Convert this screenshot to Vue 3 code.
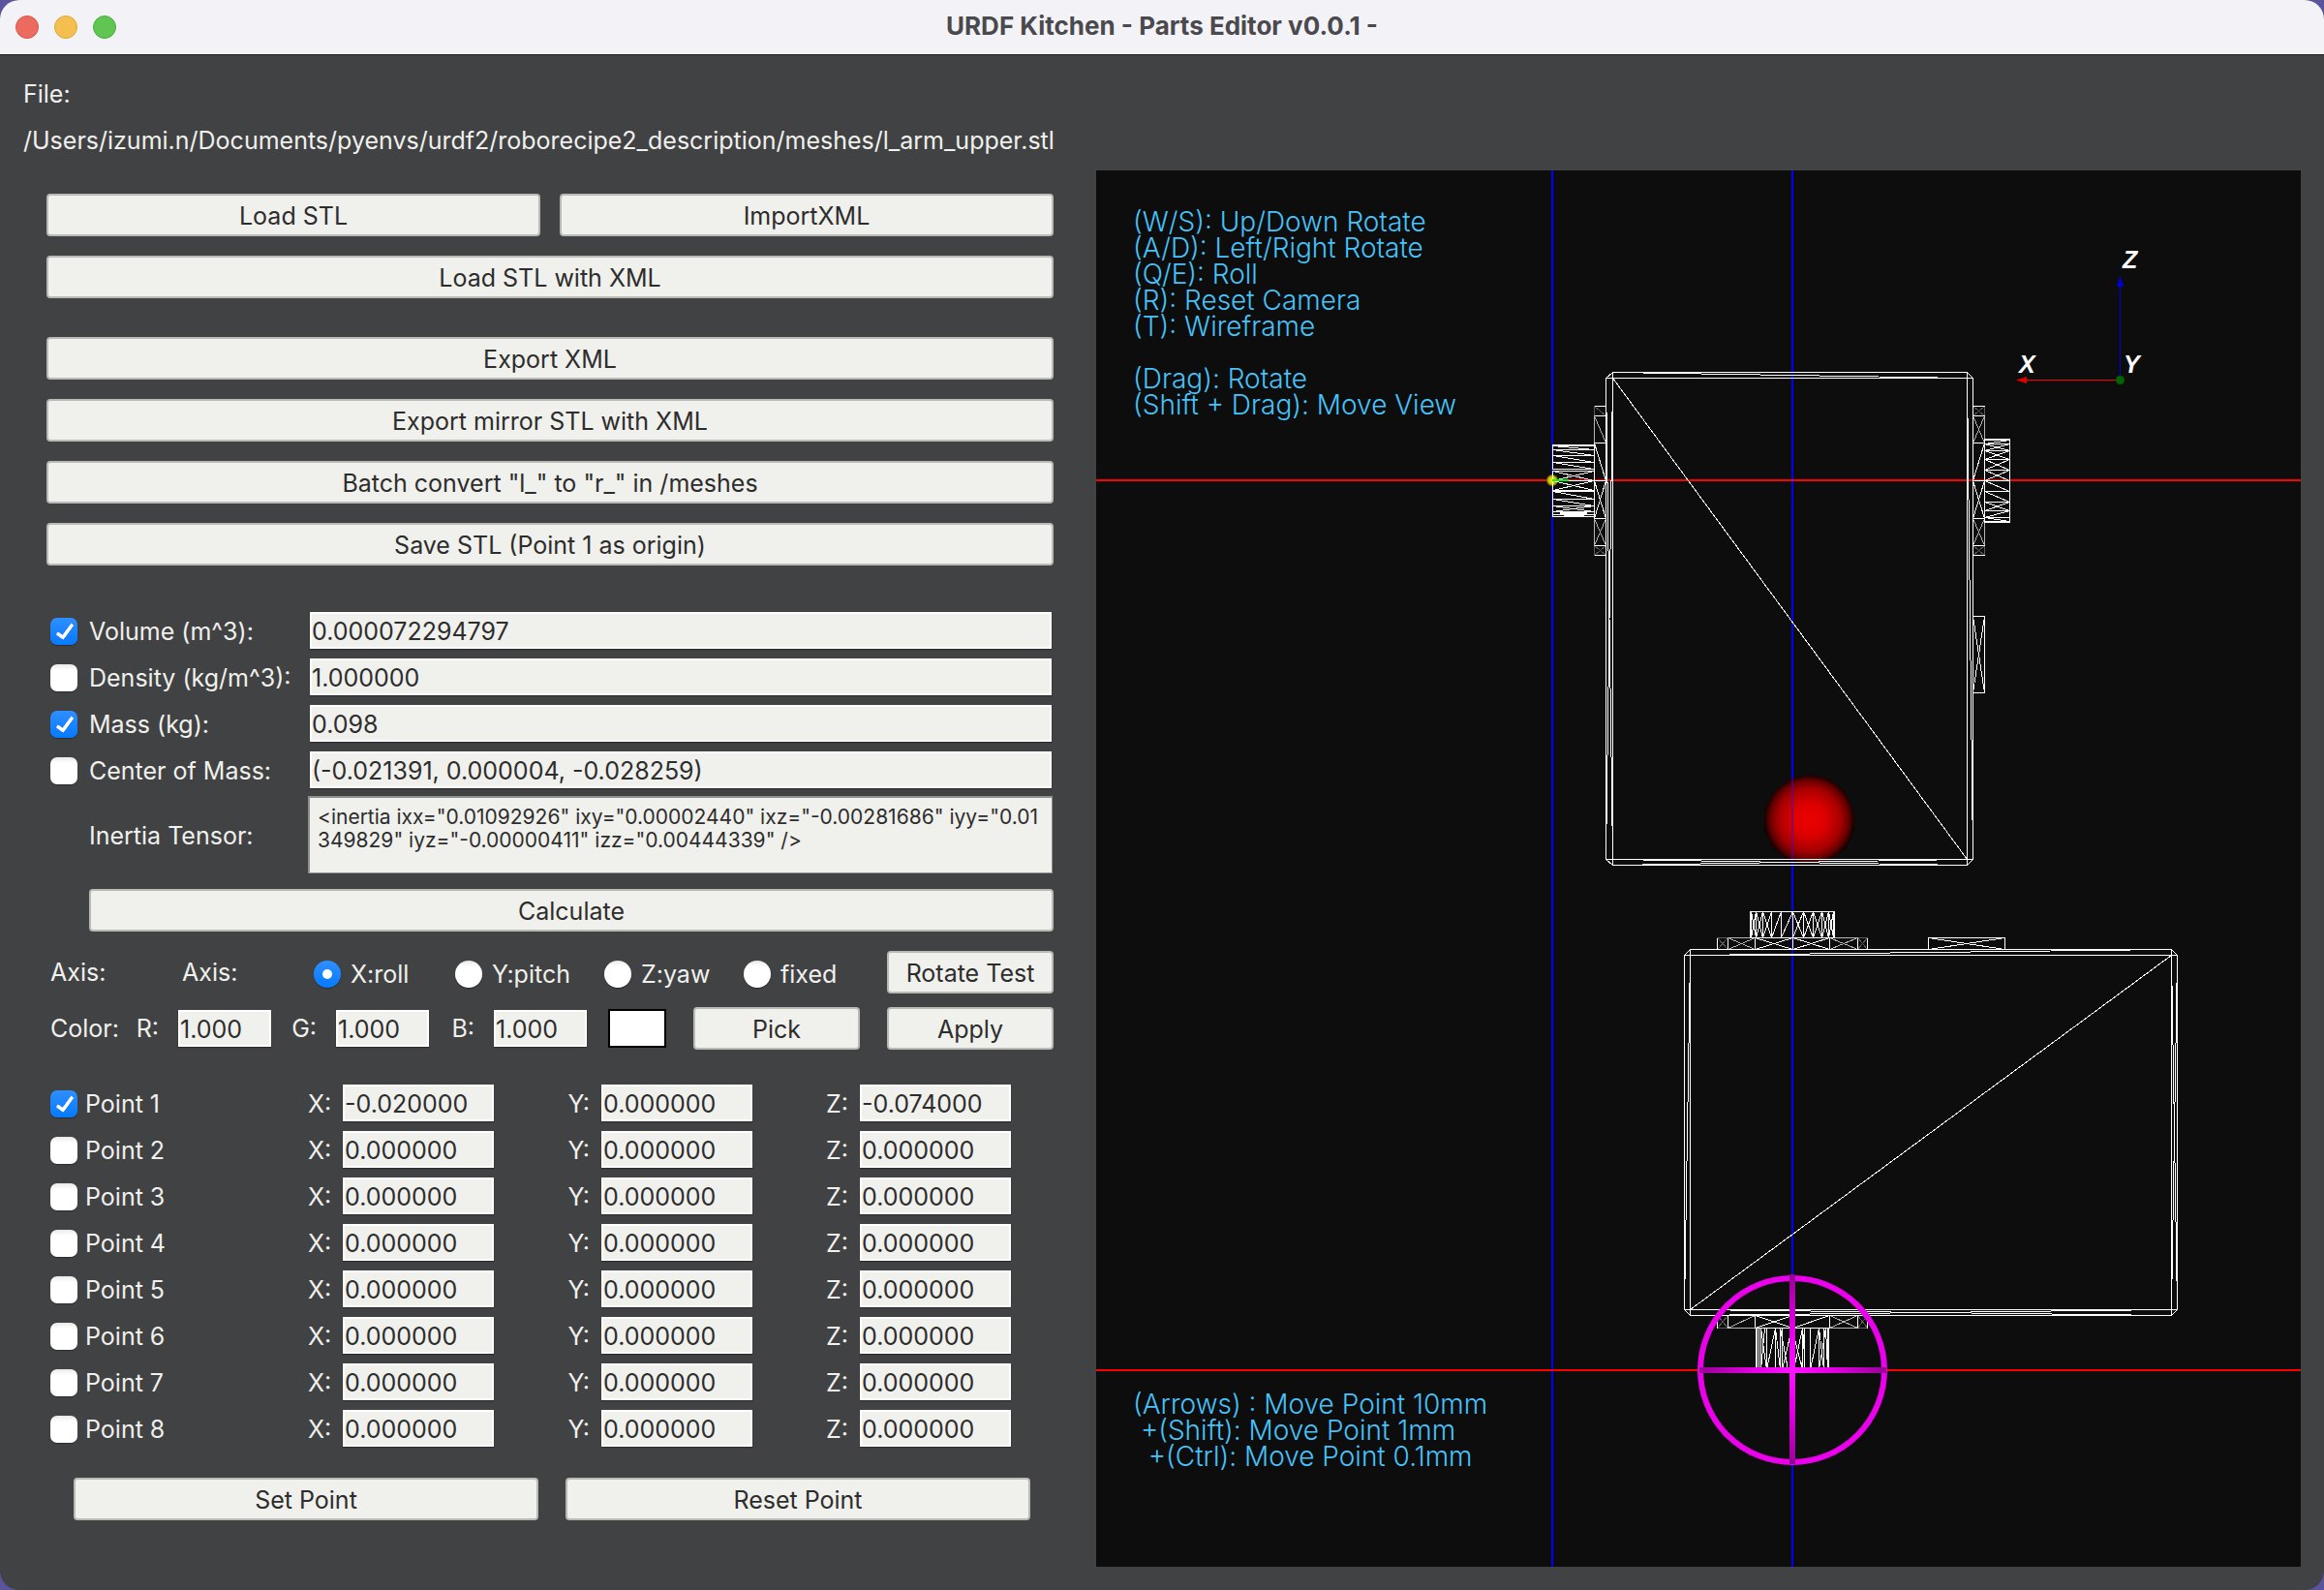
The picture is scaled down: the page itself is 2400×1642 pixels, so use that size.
<script setup>
import { ref, reactive } from 'vue'

const filePath = ref('/Users/izumi.n/Documents/pyenvs/urdf2/roborecipe2_description/meshes/l_arm_upper.stl')

const exportActions = [
  'Export XML',
  'Export mirror STL with XML',
  'Batch convert "l_" to "r_" in /meshes',
  'Save STL (Point 1 as origin)',
]

const properties = reactive([
  { id: 'volume', label: 'Volume (m^3):', value: '0.000072294797', on: true },
  { id: 'density', label: 'Density (kg/m^3):', value: '1.000000', on: false },
  { id: 'mass', label: 'Mass (kg):', value: '0.098', on: true },
  { id: 'com', label: 'Center of Mass:', value: '(-0.021391, 0.000004, -0.028259)', on: false },
])

const inertia = ref(
  '<inertia ixx="0.01092926" ixy="0.00002440" ixz="-0.00281686" iyy="0.01349829" iyz="-0.00000411" izz="0.00444339" />'
)

const axis = ref('X:roll')
const axes = ['X:roll', 'Y:pitch', 'Z:yaw', 'fixed']

const color = reactive({ R: '1.000', G: '1.000', B: '1.000' })

const points = reactive(
  Array.from({ length: 8 }, (_, i) => ({
    name: `Point ${i + 1}`,
    on: i === 0,
    coords: i === 0
      ? { X: '-0.020000', Y: '0.000000', Z: '-0.074000' }
      : { X: '0.000000', Y: '0.000000', Z: '0.000000' },
  }))
)

const cameraHints = `(W/S): Up/Down Rotate
(A/D): Left/Right Rotate
(Q/E): Roll
(R): Reset Camera
(T): Wireframe

(Drag): Rotate
(Shift + Drag): Move View`

const moveHints = `(Arrows) : Move Point 10mm
 +(Shift): Move Point 1mm
  +(Ctrl): Move Point 0.1mm`

// Wireframe helpers: a cell is a box with optional falling and rising diagonals.
function cell(x1, y1, x2, y2, diagonals = 'x') {
  let d = `M${x1} ${y1}H${x2}V${y2}H${x1}Z`
  if (diagonals !== '/') d += `M${x1} ${y1}L${x2} ${y2}`
  if (diagonals !== '\\') d += `M${x1} ${y2}L${x2} ${y1}`
  return d
}
const stackY = (x1, x2, ys, kinds) =>
  kinds.map((k, i) => cell(x1, ys[i], x2, ys[i + 1], k)).join('')
const stackX = (y1, y2, xs, kinds) =>
  kinds.map((k, i) => cell(xs[i], y1, xs[i + 1], y2, k)).join('')

const X = 'x'
const F = '\\'
const R = '/'

const bodyWires = [
  // front view shell
  'M1665 384H2031L2037 390V887L2031 893H1665L1658 887V390Z',
  'M1658 390H2037M1658 887H2037M1665 384V893M2031 384V893',
  'M1665 384L2031 390M1665 390L1658 887M1658 390L1665 887M2031 390L2037 887',
  'M1665 887L2031 893M1665 893L2031 887M1665 390L2031 887',
  // top view shell
  'M1745 980H2242L2248 986V1352L2242 1358H1745L1739 1352V986Z',
  'M1739 986H2248M1739 1352H2248M1745 980V1358M2242 980V1358',
  'M1745 986L2242 980M1745 986L1739 1352M2242 986L2248 1352M2248 986L2242 1352',
  'M1745 1352L2242 1358M1745 1358L2242 1352M1745 1352L2242 986',
  // left horn
  stackY(1646, 1658, [457, 496, 535], [F, X]),
  stackY(1603, 1646, [459, 460, 464, 470, 477, 484], [F, F, F, F, F]),
  stackY(1603, 1646, [486, 496, 506], [X, X]),
  stackY(1603, 1646, [507, 515, 522, 528, 531, 533], [F, F, X, X, F]),
  // right horn
  stackY(2037, 2049, [457, 496, 535], [R, X]),
  stackY(2049, 2075, [453, 454, 458, 465, 474, 485, 496, 507, 518, 527, 534, 538, 539], [F, R, X, X, X, X, F, F, X, R, F, F]),
  cell(2037, 636, 2049, 715),
  // upper horn of the top view
  stackX(968, 980, [1812, 1851, 1889], [X, X]),
  stackX(941, 968, [1807, 1808, 1813, 1820, 1829, 1839, 1851, 1862, 1872, 1881, 1888, 1893, 1894], [F, X, X, X, R, R, X, X, X, X, X, R]),
  cell(1991, 968, 2070, 980),
  // lower horn of the top view
  stackX(1358, 1371, [1812, 1851, 1889], [X, R]),
  'M1813 1371V1414M1814 1371V1414M1816 1371V1414M1818 1371V1414M1824 1371V1414M1833 1371V1414M1838 1371V1414M1840 1371V1414M1861 1371V1414M1863 1371V1414M1869 1371V1414M1878 1371V1414M1883 1371V1414M1887 1371V1414M1888 1371V1414',
  'M1818 1371L1824 1414M1824 1414L1833 1371L1838 1414M1838 1371L1846 1414M1840 1414L1850 1371M1850 1371L1861 1414M1852 1414L1861 1371M1863 1371L1860 1414M1869 1414L1878 1371L1883 1414M1878 1414L1885 1371L1887 1414M1818 1414L1822 1371',
].join('')

const midWires = [
  stackY(1646, 1658, [429, 457], [F]),
  stackY(1646, 1658, [535, 563], [X]),
  stackY(2037, 2049, [429, 457], [X]),
  stackY(2037, 2049, [535, 563], [X]),
  stackX(968, 980, [1784, 1812], [X]),
  stackX(968, 980, [1889, 1918], [X]),
  stackX(1358, 1371, [1784, 1812], [R]),
  stackX(1358, 1371, [1889, 1918], [X]),
].join('')

const dimWires = [
  stackY(1646, 1658, [419, 429], [F]),
  stackY(1646, 1658, [563, 573], [X]),
  stackY(2037, 2049, [419, 429], [X]),
  stackY(2037, 2049, [563, 573], [X]),
  stackX(968, 980, [1773, 1784], [X]),
  stackX(968, 980, [1918, 1928], [X]),
  stackX(1358, 1371, [1773, 1784], [X]),
  stackX(1358, 1371, [1918, 1928], [X]),
].join('')

const edgeWires =
  'M1646 419H1658M1646 429H1658M1646 457H1658M1646 535H1658M1646 563H1658M1646 573H1658' +
  'M2037 419H2049M2037 429H2049M2037 457H2049M2037 535H2049M2037 563H2049M2037 573H2049' +
  'M1773 968V980M1784 968V980M1918 968V980M1928 968V980' +
  'M1773 1358V1371M1784 1358V1371M1918 1358V1371M1928 1358V1371'
</script>

<template>
  <div class="window">
    <header class="titlebar">
      <div class="lights">
        <button class="light close" aria-label="Close"></button>
        <button class="light minimize" aria-label="Minimize"></button>
        <button class="light maximize" aria-label="Zoom"></button>
      </div>
      <h1>URDF Kitchen - Parts Editor v0.0.1 -</h1>
    </header>

    <main>
      <div class="file">
        <span>File:</span>
        <span>{{ filePath }}</span>
      </div>

      <div class="columns">
        <form class="panel" @submit.prevent>
          <div class="actions">
            <button type="button">Load STL</button>
            <button type="button">ImportXML</button>
            <button type="button" class="wide">Load STL with XML</button>
          </div>
          <div class="actions exports">
            <button v-for="a in exportActions" :key="a" type="button" class="wide">{{ a }}</button>
          </div>

          <div class="properties">
            <div v-for="p in properties" :key="p.id" class="property">
              <label class="check">
                <input v-model="p.on" type="checkbox" />
                <span>{{ p.label }}</span>
              </label>
              <input v-model="p.value" type="text" class="field" :aria-label="p.label" />
            </div>
          </div>
          <div class="inertia">
            <label for="inertia">Inertia Tensor:</label>
            <textarea id="inertia" v-model="inertia" spellcheck="false"></textarea>
          </div>
          <div class="calculate">
            <button type="button">Calculate</button>
          </div>

          <div class="axis">
            <span class="caption">Axis:</span>
            <span class="caption">Axis:</span>
            <div class="choices">
              <label v-for="a in axes" :key="a" class="radio">
                <input v-model="axis" type="radio" name="axis" :value="a" />
                <span>{{ a }}</span>
              </label>
            </div>
            <button type="button" class="small">Rotate Test</button>
          </div>

          <div class="color">
            <span class="caption">Color:</span>
            <label v-for="(v, k) in color" :key="k" class="channel">
              <span>{{ k }}:</span>
              <input v-model="color[k]" type="text" class="field" />
            </label>
            <span class="swatch"></span>
            <button type="button" class="small">Pick</button>
            <button type="button" class="small">Apply</button>
          </div>

          <div class="points">
            <div v-for="p in points" :key="p.name" class="point">
              <label class="check">
                <input v-model="p.on" type="checkbox" />
                <span>{{ p.name }}</span>
              </label>
              <label v-for="(v, k) in p.coords" :key="k" class="coord">
                <span>{{ k }}:</span>
                <input v-model="p.coords[k]" type="text" class="field" />
              </label>
            </div>
          </div>

          <div class="footer">
            <button type="button">Set Point</button>
            <button type="button">Reset Point</button>
          </div>
        </form>

        <section class="viewer">
          <svg viewBox="1132 176 1244 1442" role="img" aria-label="Wireframe view">
            <defs>
              <radialGradient id="ball" cx="0.5" cy="0.5" r="0.5">
                <stop offset="0" stop-color="#ec0000" />
                <stop offset="0.35" stop-color="#de0000" />
                <stop offset="0.7" stop-color="#a60000" />
                <stop offset="0.88" stop-color="#640000" />
                <stop offset="1" stop-color="#120202" />
              </radialGradient>
              <radialGradient id="origin" cx="0.5" cy="0.5" r="0.5">
                <stop offset="0" stop-color="#fff200" />
                <stop offset="0.6" stop-color="#d2c800" />
                <stop offset="1" stop-color="#5a5600" />
              </radialGradient>
              <linearGradient id="spokeV" x1="0" y1="0" x2="0" y2="1">
                <stop offset="0" stop-color="#960096" />
                <stop offset="0.3" stop-color="#e600e6" />
                <stop offset="0.5" stop-color="#ff14ff" />
                <stop offset="0.7" stop-color="#e600e6" />
                <stop offset="1" stop-color="#960096" />
              </linearGradient>
              <linearGradient id="spokeH">
                <stop offset="0" stop-color="#960096" />
                <stop offset="0.3" stop-color="#e600e6" />
                <stop offset="0.5" stop-color="#ff14ff" />
                <stop offset="0.7" stop-color="#e600e6" />
                <stop offset="1" stop-color="#960096" />
              </linearGradient>
            </defs>

            <g fill="none" stroke-width="2">
              <path stroke="#0000ff" d="M1603 176V1618M1851 176V1618" />
              <path stroke="#ff0000" d="M1132 496H2376M1132 1415H2376" />
            </g>

            <polygon
              fill="url(#ball)"
              points="1850,804 1869,800 1889,804 1905,817 1914,836 1915,858 1906,877 1890,888 1870,893 1848,889 1832,877 1822,858 1822,836 1832,817"
            />
            <path d="M1851 804V889" fill="none" stroke="#5a00a0" stroke-width="2" opacity="0.6" />

            <circle cx="1603" cy="496" r="6" fill="url(#origin)" />

            <g class="wires" transform="translate(0.5 0.5)">
              <path stroke="#5a5a5a" :d="dimWires" />
              <path stroke="#b4b4b4" :d="midWires" />
              <path stroke="#ffffff" :d="bodyWires" />
              <path stroke="#ffffff" :d="edgeWires" />
            </g>
            <path d="M1603 496H1620" stroke="#00ff00" stroke-width="2" />

            <circle cx="1851" cy="1415" r="95" fill="none" stroke="#eb00eb" stroke-width="6" />
            <rect x="1755" y="1412" width="193" height="6" fill="url(#spokeH)" />
            <rect x="1848" y="1316" width="6" height="196" fill="url(#spokeV)" />

            <path d="M2189.500 296V388" stroke="#0000e0" />
            <path d="M2189.500 285L2193 296H2186Z" fill="#0000e0" />
            <path d="M2092 392.500H2186" stroke="#ff0000" />
            <path d="M2082 392.500L2093 389V396Z" fill="#e00000" />
            <circle cx="2189.500" cy="392.500" r="4.500" fill="#006400" />
            <g class="axis-name">
              <text x="2192" y="277">Z</text>
              <text x="2085" y="385">X</text>
              <text x="2193" y="385">Y</text>
            </g>
          </svg>
          <p class="hints camera">{{ cameraHints }}</p>
          <p class="hints move">{{ moveHints }}</p>
        </section>
      </div>
    </main>
  </div>
</template>

<style>
body {
  margin: 0;
  background: #5a549e;
}
</style>

<style scoped>
.window {
  min-height: 100vh;
  box-sizing: border-box;
  display: flex;
  flex-direction: column;
  border-radius: 20px;
  overflow: hidden;
  background: #414244;
  color: #f0f0ec;
  font: 25px/32px Inter, "Liberation Sans", sans-serif;
}
.window *,
.window *::after {
  box-sizing: border-box;
}

.titlebar {
  position: relative;
  display: flex;
  align-items: center;
  justify-content: center;
  height: 57px;
  background: #f3f2f7;
  border-bottom: 1px solid #1c1c1e;
}
.titlebar h1 {
  margin: 0;
  padding-bottom: 2px;
  font-size: 26px;
  line-height: 32px;
  font-weight: 700;
  color: #4a494d;
}
.lights {
  position: absolute;
  left: 16px;
  display: flex;
  gap: 16px;
}
.light {
  width: 24px;
  height: 24px;
  padding: 0;
  border: 1px solid;
  border-radius: 50%;
}
.close { background: #ed6a5e; border-color: #d85549; }
.minimize { background: #f5bf4f; border-color: #dca73a; }
.maximize { background: #61c554; border-color: #4dad40; }

main {
  flex: 1;
  padding: 24px;
}
.file {
  display: flex;
  flex-direction: column;
  gap: 16px;
  margin-bottom: 15px;
}
.columns {
  display: grid;
  grid-template-columns: 271fr 311fr;
  gap: 24px;
  align-items: start;
}
.panel {
  padding: 24px 20px 0 24px;
}

.panel button {
  height: 44px;
  padding: 2px 0 0;
  border: 2px solid #b9bab6;
  border-radius: 4px;
  background: #f0f0ec;
  color: #2d2d2d;
  font: inherit;
}
.actions {
  display: grid;
  grid-template-columns: 1fr 1fr;
  gap: 20px;
}
.exports {
  margin-top: 40px;
}
.wide {
  grid-column: 1 / -1;
}

.field {
  height: 38px;
  min-width: 0;
  padding: 2px 0 0;
  border: 2px solid #ffffff;
  border-radius: 0;
  background: #f0f0ec;
  box-shadow: 0 1px 1px #2b2c2e;
  color: #2d2d2d;
  font: inherit;
}

.properties {
  display: flex;
  flex-direction: column;
  gap: 10px;
  margin-top: 48px;
  padding: 0 2px 0 4px;
}
.property {
  display: flex;
}
.property .field {
  flex: 1;
}
.check {
  display: flex;
  align-items: center;
  gap: 12px;
  width: 268px;
  padding-top: 2px;
  white-space: nowrap;
}
.check input,
.radio input {
  appearance: none;
  position: relative;
  flex: none;
  width: 28px;
  height: 28px;
  margin: 0;
  border-radius: 7px;
  background: linear-gradient(#e9e9ea, #ffffff 6px);
  box-shadow: 0 1px 1px #2b2c2e;
}
.radio input {
  border-radius: 50%;
}
.check input:checked,
.radio input:checked {
  background: linear-gradient(#2f8fff, #057aff);
}
.check input:checked::after {
  content: "";
  position: absolute;
  left: 10px;
  top: 3px;
  width: 10px;
  height: 19px;
  border: solid #ffffff;
  border-width: 0 4px 4px 0;
  border-radius: 2px;
  transform: rotate(36deg);
}
.radio input:checked::after {
  content: "";
  position: absolute;
  left: 9px;
  top: 9px;
  width: 10px;
  height: 10px;
  border-radius: 50%;
  background: #ffffff;
}

.inertia {
  display: flex;
  align-items: center;
  margin-top: 8px;
  padding: 0 1px 0 44px;
}
.inertia label {
  width: 226px;
  padding-top: 2px;
}
.inertia textarea {
  flex: 1;
  height: 80px;
  min-width: 0;
  padding: 8px;
  border: 2px solid #8f908e;
  border-width: 2px 1px 1px 2px;
  border-radius: 0;
  background: #f0f0ec;
  color: #2d2d2d;
  font: 21px/24px Inter, "Liberation Sans", sans-serif;
  word-break: break-all;
  overflow: hidden;
  resize: none;
}
.calculate {
  display: flex;
  margin-top: 16px;
  padding-left: 44px;
}
.calculate button {
  flex: 1;
}

.axis,
.color {
  display: flex;
  align-items: center;
  padding-left: 4px;
}
.axis {
  margin-top: 20px;
}
.axis .caption {
  width: 136px;
}
.choices {
  display: grid;
  grid-template-columns: 146px 154px 144px auto;
  padding-top: 4px;
}
.radio {
  display: flex;
  align-items: center;
  gap: 10px;
  white-space: nowrap;
}
.panel .small {
  width: 172px;
  margin-left: auto;
}
.color {
  margin-top: 14px;
}
.color .caption {
  width: 65px;
}
.channel {
  display: flex;
  align-items: center;
}
.channel span {
  width: 67px;
  padding-right: 20px;
  text-align: right;
}
.channel .field {
  width: 96px;
}
.swatch {
  width: 60px;
  height: 40px;
  margin-left: 22px;
  border: 2px solid #000000;
  background: #ffffff;
}

.points {
  display: flex;
  flex-direction: column;
  gap: 10px;
  margin-top: 36px;
  padding-left: 4px;
}
.point {
  display: flex;
  gap: 75px;
}
.point .check {
  gap: 8px;
  width: 191px;
}
.coord {
  display: flex;
  align-items: center;
}
.coord span {
  width: 36px;
  padding: 2px 12px 0 0;
  text-align: right;
}
.coord .field {
  width: 156px;
}

.footer {
  display: grid;
  grid-template-columns: 1fr 1fr;
  gap: 28px;
  margin-top: 32px;
  padding: 0 24px 0 28px;
}

.viewer {
  position: relative;
  background: #0d0d0d;
}
.viewer svg {
  display: block;
  width: 100%;
  height: auto;
}
.wires {
  fill: none;
  stroke-width: 1;
  shape-rendering: crispEdges;
}
.axis-name {
  font: italic bold 25px "Liberation Sans", sans-serif;
  fill: #ffffff;
}
.hints {
  position: absolute;
  left: 38px;
  margin: 0;
  color: #46c3fa;
  font: 300 28px/27px Inter, sans-serif;
  white-space: pre;
}
.camera {
  top: 40px;
}
.move {
  bottom: 100px;
}
</style>
